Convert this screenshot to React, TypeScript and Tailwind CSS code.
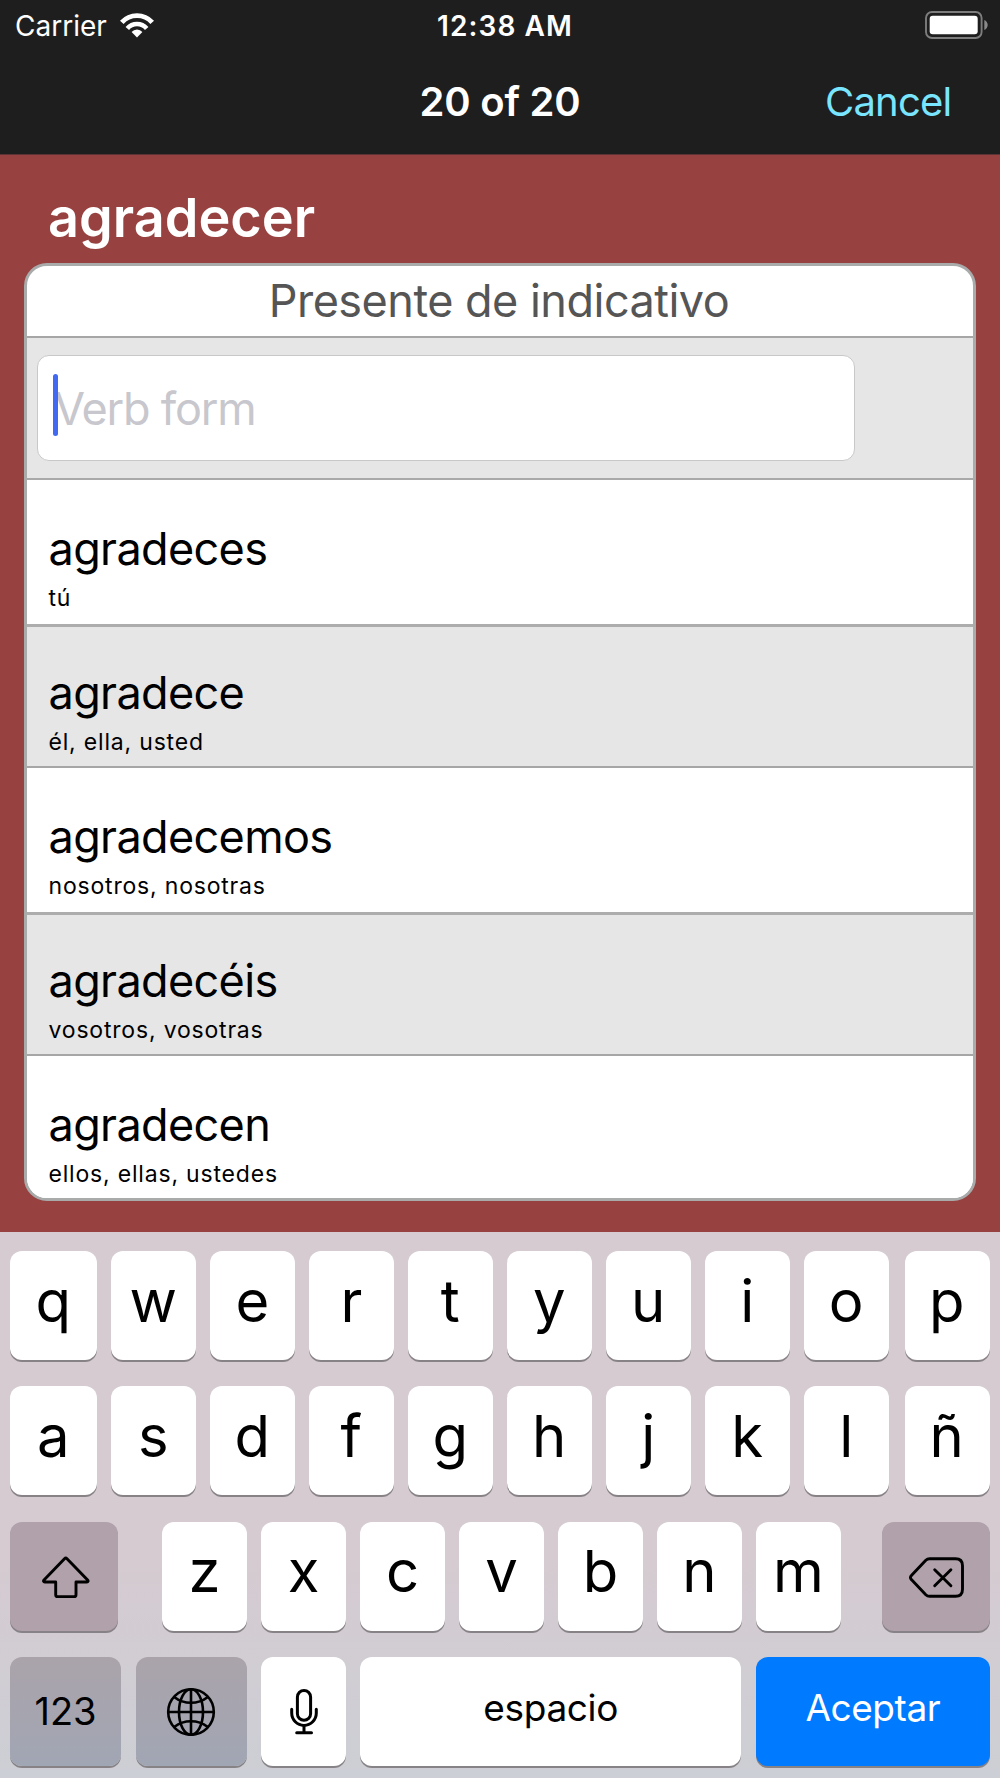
import React from "react";

interface IVerbForm {
  id: number;
  form: string;
  pronouns: string;
}

interface keyProps {
  children: React.ReactNode;
  className?: string;
}

const verbForms: IVerbForm[] = [
  { id: 1, form: "agradeces", pronouns: "tú" },
  { id: 2, form: "agradece", pronouns: "él, ella, usted" },
  { id: 3, form: "agradecemos", pronouns: "nosotros, nosotras" },
  { id: 4, form: "agradecéis", pronouns: "vosotros, vosotras" },
  { id: 5, form: "agradecen", pronouns: "ellos, ellas, ustedes" },
];

const letterRows = [
  ["q", "w", "e", "r", "t", "y", "u", "i", "o", "p"],
  ["a", "s", "d", "f", "g", "h", "j", "k", "l", "ñ"],
];
const thirdRow = ["z", "x", "c", "v", "b", "n", "m"];

function WifiIcon() {
  return (
    <svg width="34" height="25" viewBox="0 0 34 25" fill="none">
      <path d="M1.8 9.4a20.5 20.5 0 0 1 30.4 0" stroke="white" strokeWidth="4.9" />
      <path d="M7.3 15.4a12.8 12.8 0 0 1 19.4 0" stroke="white" strokeWidth="4.6" />
      <path d="M17 24.6l-5.4-5.6a7 7 0 0 1 10.8 0z" fill="white" />
    </svg>
  );
}

function BatteryIcon() {
  return (
    <svg width="64" height="28" viewBox="0 0 64 28" fill="none">
      <rect x="1" y="1" width="55.6" height="26" rx="6" stroke="#7d7d7d" strokeWidth="1.9" />
      <rect x="4.7" y="4.8" width="48" height="18.4" rx="3" fill="white" />
      <path d="M59.3 9v10c2-.8 3.4-2.8 3.4-5s-1.4-4.2-3.4-5z" fill="#8a8a8a" />
    </svg>
  );
}

function ShiftIcon() {
  return (
    <svg width="48" height="43" viewBox="0 0 48 43" fill="none">
      <path
        d="M22.5 2.7a1.8 1.8 0 0 1 2.5 0L45.6 24c.9 1 .5 2-.7 2H34v12.7c0 1.2-.7 1.9-1.9 1.9H15.6c-1.2 0-1.9-.7-1.9-1.9V26H2.7c-1.2 0-1.6-1-.7-2z"
        stroke="black"
        strokeWidth="2.9"
        strokeLinejoin="round"
      />
    </svg>
  );
}

function DeleteIcon() {
  return (
    <svg width="56" height="42" viewBox="0 0 56 42" fill="none" stroke="black" strokeWidth="2.9">
      <path d="M20.6 1.7H46.5c4.5 0 7 2.5 7 7v23.6c0 4.5-2.5 7-7 7H20.6c-1.6 0-2.7-.5-3.8-1.6L2.4 22.6c-1.3-1.3-1.3-2.7 0-4L16.8 3.3c1.1-1.1 2.2-1.6 3.8-1.6z" />
      <path d="M25.7 12.7l16.2 16M41.9 12.7l-16.2 16" strokeLinecap="round" />
    </svg>
  );
}

function GlobeIcon() {
  return (
    <svg width="50" height="50" viewBox="0 0 50 50" fill="none" stroke="black" strokeWidth="2.6">
      <circle cx="25" cy="25" r="22.8" />
      <ellipse cx="25" cy="25" rx="12" ry="22.8" />
      <path d="M25 2v46M2 25h46" />
      <path d="M8.5 10.2c9.5 7.4 23.5 7.4 33 0M8.5 39.8c9.5-7.4 23.5-7.4 33 0" />
    </svg>
  );
}

function MicIcon() {
  return (
    <svg width="28" height="46" viewBox="0 0 28 46" fill="none" stroke="black" strokeWidth="3">
      <rect x="7.4" y="1.5" width="13.2" height="29.8" rx="6.6" />
      <path
        d="M1.7 20.3v3.8a12.3 12.3 0 0 0 24.6 0v-3.8M14 36.4v7.2M6.7 43.8h14.8"
        strokeLinecap="round"
      />
    </svg>
  );
}

function Key({ children, className = "" }: keyProps) {
  return (
    <button
      className={`flex h-[109px] items-center justify-center rounded-xl shadow-[0_2px_0_#878286] ${className}`}
    >
      {children}
    </button>
  );
}

export default function App() {
  return (
    <div className="flex h-[1778px] w-[1000px] flex-col overflow-hidden bg-[#984141] font-['Inter',sans-serif]">
      {/* STATUS BAR AND TITLE */}
      <header className="h-[155px] border-b border-[#5d3333] bg-[#1e1e1e] text-white">
        <div className="flex h-[50px] items-center pl-[15px] pr-[11px] text-[28px]">
          <div className="flex w-[422px] items-center gap-[13px]">
            <span className="pt-px">Carrier</span>
            <WifiIcon />
          </div>
          <span className="pt-px font-semibold tracking-[1.09px]">12:38 AM</span>
          <div className="ml-auto pb-px">
            <BatteryIcon />
          </div>
        </div>
        <div className="grid h-[104px] grid-cols-[1fr_auto_1fr] items-center text-[40px]">
          <span />
          <h1 className="font-semibold tracking-[-0.23px]">20 of 20</h1>
          <button className="justify-self-end pr-[48.5px] tracking-[-0.78px] text-[#7ae5ff]">
            Cancel
          </button>
        </div>
      </header>

      {/* VERB FORMS */}
      <main className="h-[1077px] px-6 pt-[33px]">
        <h2 className="mb-[15px] pl-6 text-[54px] font-semibold leading-[60px] text-white">
          agradecer
        </h2>
        <div className="h-[938px] overflow-hidden rounded-[23px] border-3 border-[#a9abab] bg-white">
          <div className="flex h-[72px] items-center justify-center border-b-2 border-[#a6a6a6] pr-0.5 text-[45px] tracking-[-0.51px] text-[#555555]">
            Presente de indicativo
          </div>
          <div className="h-[142px] border-b-2 border-[#a9a9a9] bg-[#e6e6e6] pl-[10px] pt-[17px]">
            <div className="relative flex h-[106px] w-[818px] items-center rounded-xl border border-[#c8c8c8] bg-white pl-4 pt-0.5">
              <span className="text-[45px] tracking-[-1.2px] text-[#c7c7cd]">Verb form</span>
              <span className="absolute left-[15px] top-[18px] h-[62px] w-[5px] rounded-full bg-[#4169f2]" />
            </div>
          </div>
          <ul>
            {verbForms.map((v) => (
              <li
                key={v.id}
                className={`pl-[21.5px] ${
                  v.id % 2 === 0
                    ? "h-[141px] border-b-2 border-[#a6a6a6] bg-[#e6e6e6] pt-[38px]"
                    : "h-[147px] border-b-3 border-[#adadad] bg-white pt-[41px]"
                } last:border-b-0`}
              >
                <p className="text-[45px] leading-[55px] tracking-[-0.64px]">{v.form}</p>
                <p className="mt-2 text-[23px] leading-[28px] tracking-[0.81px]">
                  {v.pronouns}
                </p>
              </li>
            ))}
          </ul>
        </div>
      </main>

      {/* KEYBOARD */}
      <footer className="flex h-[546px] flex-col gap-[26.3px] bg-linear-to-b from-[#d5cbd1] from-60% to-[#cccfd5] px-[10px] pt-[19px] text-[58px] font-[370]">
        {letterRows.map((row) => (
          <div key={row[0]} className="flex gap-[14.3px]">
            {row.map((letter) => (
              <Key
                key={letter}
                className="w-[84.7px] bg-white pb-[9px] first:w-[86.7px] last:ml-auto last:pr-0.5"
              >
                {letter}
              </Key>
            ))}
          </div>
        ))}
        <div className="flex justify-between">
          <Key className="w-[108px] bg-[#b0a1aa] pl-[3px] pt-[3px]">
            <ShiftIcon />
          </Key>
          <div className="flex gap-[14.3px] pl-[3px]">
            {thirdRow.map((letter) => (
              <Key key={letter} className="w-[84.7px] bg-white pb-[9px]">
                {letter}
              </Key>
            ))}
          </div>
          <Key className="w-[108px] bg-[#b0a1aa] pl-[2px] pt-[3px]">
            <DeleteIcon />
          </Key>
        </div>
        <div className="flex gap-[14.5px] text-[37px] font-normal">
          <Key className="w-[111px] bg-linear-to-b from-[#aaa3aa] to-[#a1a6b4] text-[38px]">
            123
          </Key>
          <Key className="w-[111px] bg-linear-to-b from-[#aaa3aa] to-[#a1a6b4] pt-px">
            <GlobeIcon />
          </Key>
          <Key className="w-[84.7px] bg-white pl-px pt-0.5">
            <MicIcon />
          </Key>
          <Key className="w-[381px] bg-white pb-[7px] tracking-[-0.35px]">espacio</Key>
          <Key className="flex-1 bg-[#007aff] pb-[7px] tracking-[-0.43px] text-white">
            Aceptar
          </Key>
        </div>
      </footer>
    </div>
  );
}
